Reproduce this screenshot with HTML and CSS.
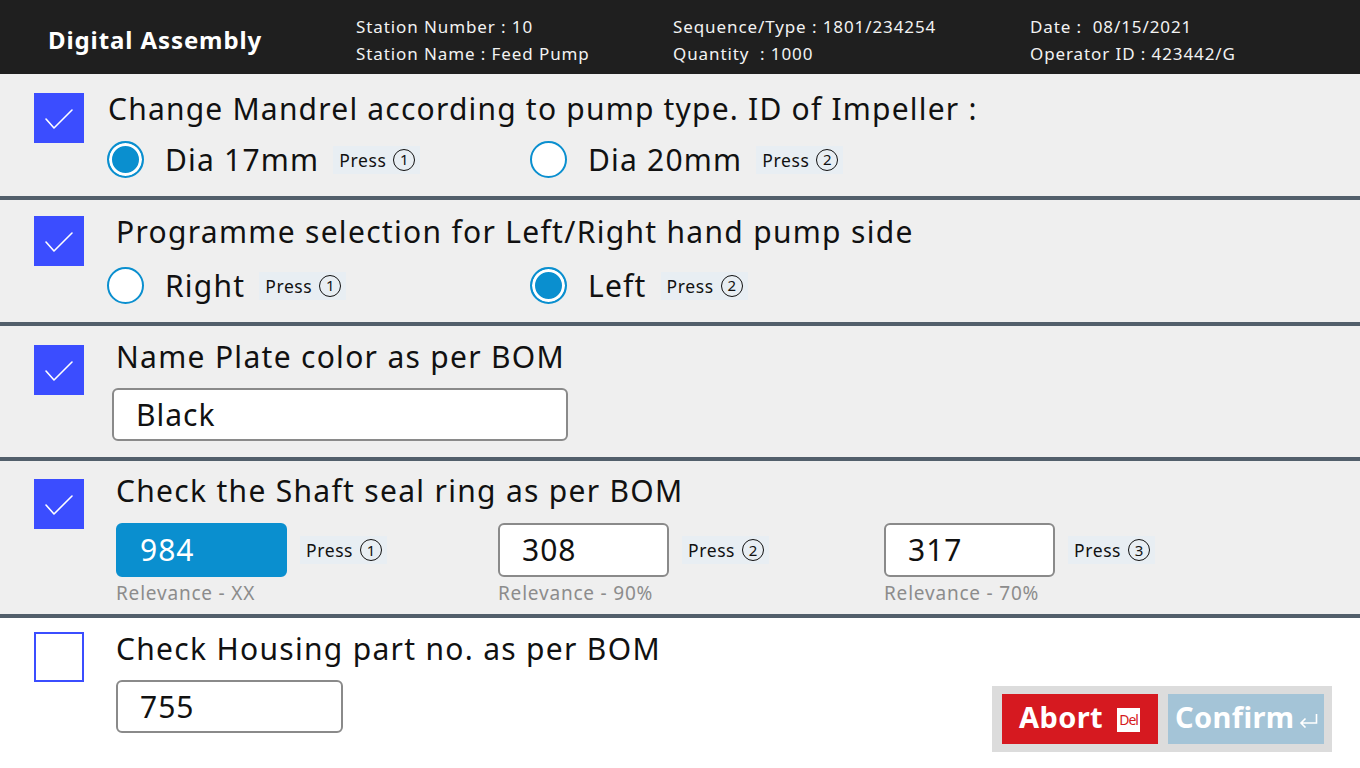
FILE: index.html
```html
<!DOCTYPE html>
<html lang="en">
<head>
<meta charset="utf-8">
<title>Digital Assembly</title>
<link rel="stylesheet" href="styles.css">
</head>
<body>
<header class="topbar">
  <div class="brand">Digital Assembly</div>
  <div class="info">
    <div>Station Number : 10</div>
    <div>Station Name :&nbsp;Feed Pump</div>
  </div>
  <div class="info">
    <div>Sequence/Type : 1801/234254</div>
    <div>Quantity &nbsp;: 1000</div>
  </div>
  <div class="info">
    <div>Date : &nbsp;08/15/2021</div>
    <div>Operator ID : 423442/G</div>
  </div>
</header>

<main class="steps">
  <section class="step step-1">
    <div class="check checked"><svg viewBox="0 0 50 50"><path d="M12 26 L20 35 L38 17" /></svg></div>
    <div class="body">
      <div class="title title-tight">Change Mandrel according to pump type. ID of Impeller :</div>
      <div class="options">
        <div class="option"><span class="radio on"></span><span class="opt-label">Dia 17mm</span><span class="press">Press <span class="key">1</span></span></div>
        <div class="option"><span class="radio"></span><span class="opt-label">Dia 20mm</span><span class="press">Press <span class="key">2</span></span></div>
      </div>
    </div>
  </section>

  <section class="step step-2">
    <div class="check checked"><svg viewBox="0 0 50 50"><path d="M12 26 L20 35 L38 17" /></svg></div>
    <div class="body">
      <div class="title">Programme selection for Left/Right hand pump side</div>
      <div class="options">
        <div class="option"><span class="radio"></span><span class="opt-label">Right</span><span class="press">Press <span class="key">1</span></span></div>
        <div class="option"><span class="radio on"></span><span class="opt-label">Left</span><span class="press">Press <span class="key">2</span></span></div>
      </div>
    </div>
  </section>

  <section class="step step-3">
    <div class="check checked low"><svg viewBox="0 0 50 50"><path d="M12 26 L20 35 L38 17" /></svg></div>
    <div class="body">
      <div class="title">Name Plate color as per BOM</div>
      <div class="field wide">Black</div>
    </div>
  </section>

  <section class="step step-4">
    <div class="check checked low"><svg viewBox="0 0 50 50"><path d="M12 26 L20 35 L38 17" /></svg></div>
    <div class="body">
      <div class="title">Check the Shaft seal ring as per BOM</div>
      <div class="choices">
        <div class="choice">
          <div class="choice-row"><div class="field part selected">984</div><span class="press">Press <span class="key">1</span></span></div>
          <div class="relevance">Relevance - XX</div>
        </div>
        <div class="choice">
          <div class="choice-row"><div class="field part">308</div><span class="press">Press <span class="key">2</span></span></div>
          <div class="relevance">Relevance - 90%</div>
        </div>
        <div class="choice">
          <div class="choice-row"><div class="field part">317</div><span class="press">Press <span class="key">3</span></span></div>
          <div class="relevance">Relevance - 70%</div>
        </div>
      </div>
    </div>
  </section>

  <section class="step step-5">
    <div class="check"></div>
    <div class="body">
      <div class="title">Check Housing part no. as per BOM</div>
      <div class="field mid">755</div>
    </div>
    <div class="actions">
      <button class="btn abort">Abort <span class="del">Del</span></button>
      <button class="btn confirm">Confirm<svg class="enter" viewBox="0 0 20 15"><path d="M18.5 1 V10 H3 M7.5 5.5 L3 10 L7.5 14.5" /></svg></button>
    </div>
  </section>
</main>
</body>
</html>
```

FILE: styles.css
```css
* { box-sizing: border-box; }
html, body { margin: 0; padding: 0; }
body {
  width: 1360px;
  height: 768px;
  overflow: hidden;
  background: #ffffff;
  font-family: "Noto Sans", "Open Sans", sans-serif;
  color: #111;
}

.topbar {
  height: 74px;
  background: #1f1f1f;
  color: #f2f2f2;
  display: grid;
  grid-template-columns: 308px 317px 357px 1fr;
  align-items: center;
  padding-left: 48px;
}
.brand {
  font-size: 24px;
  font-weight: 700;
  color: #fff;
  letter-spacing: 0.9px;
  padding-top: 4px;
}
.info {
  font-size: 17px;
  line-height: 27px;
  letter-spacing: 0.9px;
  padding-top: 5px;
}

.steps { display: flex; flex-direction: column; }

.step {
  display: grid;
  grid-template-columns: 34px 50px 1fr;
  align-items: start;
  background: #efefef;
  border-bottom: 4px solid #525f6b;
}
.step-1 { height: 126px; padding-top: 17px; }
.step-2 { height: 126px; padding-top: 14px; }
.step-3 { height: 135px; padding-top: 13px; }
.step-4 { height: 157px; padding-top: 12px; }
.step-5 {
  height: 150px;
  padding-top: 13px;
  background: #ffffff;
  border-bottom: none;
  grid-template-columns: 34px 50px 1fr auto;
}

.check {
  grid-column: 2;
  width: 50px;
  height: 50px;
  margin-top: 2px;
  border: 2px solid #3b4dff;
  background: transparent;
}
.step-5 .check { margin-top: 1px; }
.check.low { margin-top: 6px; }
.check.checked { background: #3b4dff; border: none; }
.check svg { display: block; width: 50px; height: 50px; }
.check path { fill: none; stroke: #fff; stroke-width: 1.6; stroke-linecap: round; stroke-linejoin: round; }

.body {
  grid-column: 3;
  padding-left: 23px;
}
.title {
  font-size: 30px;
  line-height: 36px;
  letter-spacing: 1.3px;
  margin-left: 9px;
  white-space: nowrap;
}
.title.title-tight { margin-left: 1px; letter-spacing: 1.2px; }

.options {
  display: grid;
  grid-template-columns: 423px auto;
  margin-top: 14px;
}
.step-2 .options { margin-top: 17px; }
.option {
  display: flex;
  align-items: center;
  height: 37px;
}
.radio {
  width: 37px;
  height: 37px;
  border-radius: 50%;
  border: 2px solid #0a8fcf;
  background: #fff;
  flex: none;
}
.radio.on {
  background: #0a8fcf;
  box-shadow: inset 0 0 0 3px #fff;
  border-width: 2.5px;
}
.opt-label {
  font-size: 30px;
  line-height: 36px;
  letter-spacing: 1.2px;
  margin-left: 21px;
}
.press {
  display: inline-flex;
  align-items: center;
  gap: 7px;
  background: #e8eef3;
  font-size: 17.5px;
  line-height: 28px;
  letter-spacing: 0.6px;
  padding: 0 5px 0 6px;
  margin-left: 14px;
  color: #111;
}
.key {
  display: inline-flex;
  align-items: center;
  justify-content: center;
  width: 22px;
  height: 22px;
  border: 1.3px solid #111;
  border-radius: 50%;
  font-size: 15px;
  line-height: 1;
  letter-spacing: 0;
}

.field {
  background: #fff;
  border: 2px solid #8a8a8a;
  border-radius: 6px;
  font-size: 30px;
  line-height: 36px;
  letter-spacing: 1px;
  display: flex;
  align-items: center;
}
.field.wide {
  width: 456px;
  height: 53px;
  margin-top: 13px;
  margin-left: 5px;
  padding-left: 22px;
}
.field.mid {
  width: 227px;
  height: 53px;
  margin-top: 13px;
  margin-left: 9px;
  padding-left: 22px;
}

.choices {
  display: grid;
  grid-template-columns: 382px 386px auto;
  margin-top: 14px;
  margin-left: 9px;
}
.choice-row { display: flex; align-items: center; }
.field.part {
  width: 171px;
  height: 54px;
  padding-left: 22px;
}
.field.part.selected {
  background: #0a8fcf;
  border-color: #0a8fcf;
  color: #fff;
}
.choice-row .press { margin-left: 13px; }
.relevance {
  font-size: 19px;
  line-height: 24px;
  letter-spacing: 0.8px;
  margin-top: 4px;
  color: #8c8c8c;
}

.actions {
  grid-column: 4;
  align-self: end;
  margin-right: 28px;
  margin-bottom: 16px;
  background: #dcdcdc;
  padding: 8px 8px 8px 10px;
  display: flex;
  gap: 10px;
}
.btn {
  width: 156px;
  height: 50px;
  border: none;
  font-family: "Noto Sans", "Open Sans", sans-serif;
  font-weight: 700;
  font-size: 29px;
  letter-spacing: 0.4px;
  line-height: 1;
  color: #fff;
  display: flex;
  align-items: center;
  padding: 0 0 5px 0;
}
.abort {
  background: #d61920;
  padding-left: 17px;
}
.del {
  display: inline-flex;
  align-items: center;
  justify-content: center;
  width: 23px;
  height: 24px;
  margin-left: 14px;
  margin-top: 7px;
  background: #fff;
  color: #d61920;
  font-size: 14px;
  font-weight: 400;
  letter-spacing: -1px;
}
.confirm {
  background: #a4c4d7;
  padding-left: 7px;
}
.enter {
  width: 20px;
  height: 15px;
  margin-left: 3px;
  margin-top: 7px;
  flex: none;
}
.enter path { fill: none; stroke: #fff; stroke-width: 1.6; }
```
